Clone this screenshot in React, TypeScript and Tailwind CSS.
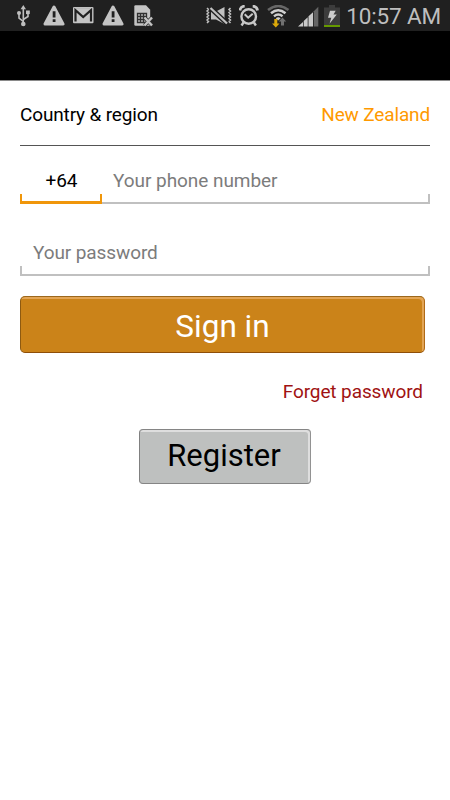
const UsbIcon = () => (
    <svg className="ml-[17px]" width="13" height="22" viewBox="0 0 13 22" fill="none" stroke="#bebebe" strokeWidth="1.6">
        <path d="M6.3 18V3" />
        <path d="M6.3 16.5 2 13V9M6.3 14.5 11 11.5V7.5" />
        <path d="M6.3 0 9 4.3H3.6Z" fill="#bebebe" stroke="none" />
        <circle cx="6.3" cy="19" r="2.3" fill="#bebebe" stroke="none" />
        <circle cx="2" cy="8" r="2" fill="#bebebe" stroke="none" />
        <path d="M9 5.5h3.8v3.6H9Z" fill="#bebebe" stroke="none" />
    </svg>
);

const WarningIcon = ({ className }: { className: string }) => (
    <svg className={className} width="22" height="22" viewBox="0 0 22 22">
        <path d="M11 2 20 19H2Z" fill="#c4c4c4" stroke="#c4c4c4" strokeWidth="3" strokeLinejoin="round" />
        <path d="M9.7 6.3h2.8v6.2H9.7zM9.7 14.2h2.8V17H9.7z" fill="#202020" />
    </svg>
);

const MailIcon = () => (
    <svg className="ml-[8px]" width="21" height="22" viewBox="0 0 21 22">
        <rect y="2" width="20.500" height="16.3" rx="1" fill="#c4c4c4" />
        <path d="M2.5 16.5V5.2L10.2 12 18 5.2v11.3" fill="none" stroke="#202020" strokeWidth="2.2" />
        <path d="M3 3.2h15" stroke="#b4b4b4" />
    </svg>
);

const SimIcon = () => (
    <svg className="ml-[10px]" width="19" height="22" viewBox="0 0 19 22">
        <path d="M1.5.2H12l4.200 4.500v16H1.5Q.3 20.700.3 19.500V1.400Q.3.2 1.5.2Z" fill="#c4c4c4" />
        <path d="M3.5 8.5h9v9h-9ZM3.5 11.5h9M3.5 14.5h9M6.5 8.5v9M9.5 8.5v9" fill="none" stroke="#303030" strokeWidth="1.3" />
        <path d="m10.500 12.500 7.500 8m0-8-7.500 8" stroke="#303030" strokeWidth="3.800" />
        <path d="m10.500 12.500 7.500 8m0-8-7.500 8" stroke="#c4c4c4" strokeWidth="2.400" />
    </svg>
);

const MuteVibrateIcon = () => (
    <svg className="ml-auto" width="26" height="22" viewBox="0 0 26 22" fill="none" stroke="#c0c0c0">
        <path d="m1 3 1.5 1.5L1 6l1.5 1.5L1 9l1.5 1.5L1 12l1.5 1.5L1 15l1.5 1.5L1 18" strokeWidth="1.5" />
        <path d="m24.5 3-1.5 1.5L24.5 6 23 7.5 24.5 9 23 10.5l1.5 1.5-1.5 1.5 1.5 1.5-1.5 1.5 1.5 1.5" strokeWidth="1.5" />
        <path d="M5 6.5h5L18.500 2v17L10 14.500H5Z" fill="#c0c0c0" stroke="none" />
        <path d="m4.500 3 16.500 15.500" stroke="#202020" strokeWidth="5" />
        <path d="m4.500 3 16.500 15.500" strokeWidth="2.3" />
    </svg>
);

const AlarmIcon = () => (
    <svg className="ml-[7px]" width="20" height="22" viewBox="0 0 20 22" fill="none" stroke="#c8c8c8">
        <circle cx="9.700" cy="11.5" r="7.3" strokeWidth="2.4" />
        <path d="m5.700 9.200 3.500 3.500 4.500-4" strokeWidth="2" />
        <path d="M.9 5.500A5 5 0 0 1 5.700 1.200M18.500 5.500A5 5 0 0 0 13.700 1.200" strokeWidth="2.8" />
        <path d="m4.500 17.500-2 3M14.900 17.500l2 3" strokeWidth="2.4" />
    </svg>
);

const WifiIcon = () => (
    <svg className="ml-[8px]" width="23" height="23" viewBox="0 0 23 23" fill="none">
        <path d="M1 5Q11.2-3 21.5 5" stroke="#676767" strokeWidth="2.5" />
        <path d="M4 8.3Q11.2 2.3 18.5 8.3" stroke="#d0d0d0" strokeWidth="2.5" />
        <path d="M7 11.3Q11.2 7.8 15.5 11.3" stroke="#d0d0d0" strokeWidth="2.4" />
        <path d="M8.8 13.2Q11.2 11.2 13.7 13.2L11.2 15.5Z" fill="#d0d0d0" />
        <path d="M7.3 14h3v4.5h2.2L8.8 22.5 5 18.5h2.3Z" fill="#dba80a" />
        <path d="M14 20.5v-4h-2.3l3.8-4 3.7 4H17v4Z" fill="#707070" />
    </svg>
);

const SignalIcon = () => (
    <svg className="ml-[8px]" width="21" height="22" viewBox="0 0 21 22">
        <path d="M0 21.5 5 17v4.5ZM5.7 16l4-3.7v9.2h-4ZM10.5 11.3l4.5-4v14.2h-4.5Z" fill="#c9c9c9" />
        <path d="m15.8 6.2 4.5-4.4v19.7h-4.5Z" fill="#656565" />
    </svg>
);

const BatteryIcon = () => (
    <svg className="ml-[5px]" width="16" height="23" viewBox="0 0 16 23">
        <path d="M5 0h6v2.5h5V22H0V2.5h5Z" fill="#3c3c3c" />
        <path d="M0 20h16v2H0Z" fill="#669900" />
        <path d="M6 5.7h5.7L9.5 9.5h3.3L5.5 18.7l1.8-6H4Z" fill="#cccccc" />
    </svg>
);

const StatusBar = () => (
    <div className="flex h-[31px] items-start bg-[#202020] pt-[5px] pr-[9px]">
        <UsbIcon />
        <WarningIcon className="ml-[13px]" />
        <MailIcon />
        <WarningIcon className="ml-[8px]" />
        <SimIcon />
        <MuteVibrateIcon />
        <AlarmIcon />
        <WifiIcon />
        <SignalIcon />
        <BatteryIcon />
        <span className="ml-[5px] w-[96px] text-right text-[22.5px] leading-[22px] tracking-[-0.15px] whitespace-nowrap text-[#bebebe]">10:57 AM</span>
    </div>
);

const App = () => {
    return (
        <div className="h-[800px] w-[450px] overflow-hidden bg-white font-['Roboto',sans-serif]">
            <StatusBar />
            <div className="h-[50px] border-b border-[#8a8a8a] bg-black"></div>

            <div className="px-5">
                <div className="flex h-[65px] items-center justify-between border-b border-[#555555] pt-[4px] text-[19px] tracking-[-0.15px]">
                    <span className="text-black">Country &amp; region</span>
                    <span className="text-[#ff9900]">New Zealand</span>
                </div>

                <div className="flex h-[58px]">
                    <div className="flex w-[82px] flex-col justify-end">
                        <span className="mb-[2px] pl-[1px] text-center text-[19px] leading-[22px] tracking-[-0.1px]">+64</span>
                        <div className="h-[10px] border-x-2 border-b-[3px] border-[#f0960a]"></div>
                    </div>
                    <div className="flex flex-1 flex-col justify-end">
                        <span className="mb-[2px] pl-[11px] text-[19px] leading-[22px] tracking-[-0.05px] text-[#7c7c7c]">Your phone number</span>
                        <div className="h-[10px] border-r-2 border-b-2 border-[#c0c0c0]"></div>
                    </div>
                </div>

                <div className="flex h-[72px] flex-col justify-end">
                    <span className="mb-[2px] pl-[13px] text-[19px] leading-[22px] tracking-[-0.1px] text-[#7c7c7c]">Your password</span>
                    <div className="h-[10px] border-x-2 border-b-2 border-[#c0c0c0]"></div>
                </div>

                <button className="mt-5 block h-[57px] w-[405px] rounded-[5px] border border-t-[#9c681c] border-r-[#b06a18] border-b-[#8e4e08] border-l-[#8e5a10] bg-[#cb8319] pt-[4px] text-[31.5px] leading-[51px] text-white shadow-[inset_-2px_2px_0_#e3a555]">
                    Sign in
                </button>

                <p className="mt-[28px] pr-[7px] text-right text-[19px] leading-[22px] tracking-[-0.1px] text-[#a01212]">Forget password</p>

                <button className="mt-[26px] ml-[119px] block h-[55px] w-[172px] rounded-[4px] border border-t-[#858585] border-r-[#929292] border-b-[#858585] border-l-[#808080] bg-[#bec0bf] pr-[2px] pb-[2px] pl-0 text-[31px] leading-[51px] text-black shadow-[inset_-2px_2px_0_#dedede]">
                    Register
                </button>
            </div>
        </div>
    );
};

export default App;
